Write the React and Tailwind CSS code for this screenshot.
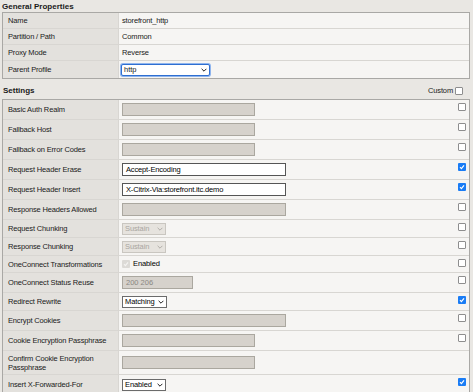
const font = { fontFamily: '"Liberation Sans", Arial, sans-serif' };

function Check({ on }) {
  if (on)
    return (
      <span className="flex h-[8px] w-[8px] items-center justify-center rounded-[1px] bg-[#1a7cf5]">
        <svg width="6" height="6" viewBox="0 0 6 6" className="block">
          <path d="M1 3.2 L2.4 4.6 L5 1.4" stroke="#fff" strokeWidth="1.2" fill="none" />
        </svg>
      </span>
    );
  return <span className="block h-[8px] w-[8px] rounded-[1px] border border-[#8e8e8e] bg-white" />;
}

function Disabled({ w }) {
  return <div className={`h-[13px] ${w} border border-[#aaa79f] bg-[#d6d2cc]`} />;
}

function TextBox({ value }) {
  return (
    <div className="flex h-[13px] w-[164px] items-center border border-[#555] bg-white pl-[3px] text-[7.5px] tracking-[-0.15px] text-black">
      {value}
    </div>
  );
}

function Select({ value, w, dim }) {
  return (
    <div
      className={`flex h-[12px] ${w} items-center justify-between border px-[2px] text-[7.5px] tracking-[-0.1px] ${
        dim ? "border-[#c9c6c0] bg-[#e6e3de] text-[#a9a6a1]" : "border-[#6b6b6b] bg-white text-black"
      }`}
    >
      <span>{value}</span>
      <svg width="6" height="4" viewBox="0 0 6 4" className="block">
        <path d="M0.6 0.8 L3 3.2 L5.4 0.8" stroke={dim ? "#b0ada8" : "#222"} strokeWidth="1" fill="none" />
      </svg>
    </div>
  );
}

const settings = [
  { label: "Basic Auth Realm", h: "h-[20px]", ctl: <Disabled w="w-[133px]" /> },
  { label: "Fallback Host", h: "h-[20px]", ctl: <Disabled w="w-[133px]" /> },
  { label: "Fallback on Error Codes", h: "h-[20px]", ctl: <Disabled w="w-[133px]" /> },
  { label: "Request Header Erase", h: "h-[20px]", ctl: <TextBox value="Accept-Encoding" />, on: true },
  { label: "Request Header Insert", h: "h-[20px]", ctl: <TextBox value="X-Citrix-Via:storefront.itc.demo" />, on: true },
  { label: "Response Headers Allowed", h: "h-[20px]", ctl: <Disabled w="w-[164px]" /> },
  { label: "Request Chunking", h: "h-[18px]", ctl: <Select value="Sustain" w="w-[44px]" dim /> },
  { label: "Response Chunking", h: "h-[18px]", ctl: <Select value="Sustain" w="w-[44px]" dim /> },
  {
    label: "OneConnect Transformations",
    h: "h-[17px]",
    ctl: (
      <div className="flex items-center gap-[3px] text-[7.5px] tracking-[-0.1px] text-black">
        <span className="flex h-[8px] w-[8px] items-center justify-center rounded-[1px] bg-[#dcdad6]">
          <svg width="6" height="6" viewBox="0 0 6 6" className="block">
            <path d="M1 3.2 L2.4 4.6 L5 1.4" stroke="#f4f3f1" strokeWidth="1.2" fill="none" />
          </svg>
        </span>
        Enabled
      </div>
    ),
  },
  {
    label: "OneConnect Status Reuse",
    h: "h-[20px]",
    ctl: (
      <div className="flex h-[13px] w-[71px] items-center border border-[#aaa79f] bg-[#d6d2cc] pl-[3px] text-[7.5px] text-[#8a8782]">
        200 206
      </div>
    ),
  },
  { label: "Redirect Rewrite", h: "h-[18px]", ctl: <Select value="Matching" w="w-[45px]" />, on: true },
  { label: "Encrypt Cookies", h: "h-[20px]", ctl: <Disabled w="w-[164px]" /> },
  { label: "Cookie Encryption Passphrase", h: "h-[20px]", ctl: <Disabled w="w-[133px]" /> },
  { label: "Confirm Cookie Encryption Passphrase", h: "h-[24px]", ctl: <Disabled w="w-[133px]" />, none: true },
  { label: "Insert X-Forwarded-For", h: "h-[20px]", ctl: <Select value="Enabled" w="w-[44px]" />, on: true },
];

const general = [
  ["Name", "storefront_http"],
  ["Partition / Path", "Common"],
  ["Proxy Mode", "Reverse"],
];

export default function App() {
  return (
    <div className="h-[392px] w-[473px] overflow-hidden bg-[#e9e7e3] leading-none text-[#1a1a1a]" style={font}>
      <div className="px-[2px] pt-[2px] pb-[1px] text-[8px] font-bold leading-[9px]">General Properties</div>
      <div className="ml-[2px] w-[468px] border border-[#a9a8a5]">
        {general.map(([k, v]) => (
          <div key={k} className="flex h-[16px] border-b border-[#d8d6d2]">
            <div className="flex w-[116px] items-center border-r border-[#d8d6d2] bg-[#e3e1dd] pl-[5px] text-[7.5px] tracking-[-0.15px]">{k}</div>
            <div className="flex flex-1 items-center bg-[#f6f5f3] pl-[3px] text-[7.5px] tracking-[-0.15px]">{v}</div>
          </div>
        ))}
        <div className="flex h-[17px]">
          <div className="flex w-[116px] items-center border-r border-[#d8d6d2] bg-[#e3e1dd] pl-[5px] text-[7.5px] tracking-[-0.15px]">Parent Profile</div>
          <div className="flex flex-1 items-center bg-[#f6f5f3] pl-[2px]">
            <div className="flex h-[12px] w-[89px] items-center justify-between rounded-[2px] border border-[#2f6fd1] bg-white px-[2px] text-[7.5px] shadow-[0_0_0_1px_#8fb5ee]">
              <span>http</span>
              <svg width="6" height="4" viewBox="0 0 6 4" className="block">
                <path d="M0.6 0.8 L3 3.2 L5.4 0.8" stroke="#222" strokeWidth="1" fill="none" />
              </svg>
            </div>
          </div>
        </div>
      </div>
      <div className="flex h-[20px] items-end justify-between px-[3px] pb-[4px]">
        <span className="text-[8px] font-bold leading-[9px]">Settings</span>
        <span className="mr-[7px] flex items-center gap-[2px] text-[7.5px] leading-[9px] tracking-[-0.15px]">
          Custom <Check />
        </span>
      </div>
      <div className="ml-[2px] w-[468px] border border-[#a9a8a5]">
        {settings.map((r) => (
          <div key={r.label} className={`flex ${r.h} border-b border-[#d8d6d2]`}>
            <div className="flex w-[116px] items-center border-r border-[#d8d6d2] bg-[#e3e1dd] pl-[5px] pr-[3px] text-[7.5px] leading-[9px] tracking-[-0.15px]">
              {r.label}
            </div>
            <div className="flex flex-1 items-center bg-[#f6f5f3] pl-[3px] pr-[3px]">
              <div className="flex-1">{r.ctl}</div>
              <div className="self-start pt-[3px]">{r.none ? null : <Check on={r.on} />}</div>
            </div>
          </div>
        ))}
      </div>
    </div>
  );
}
